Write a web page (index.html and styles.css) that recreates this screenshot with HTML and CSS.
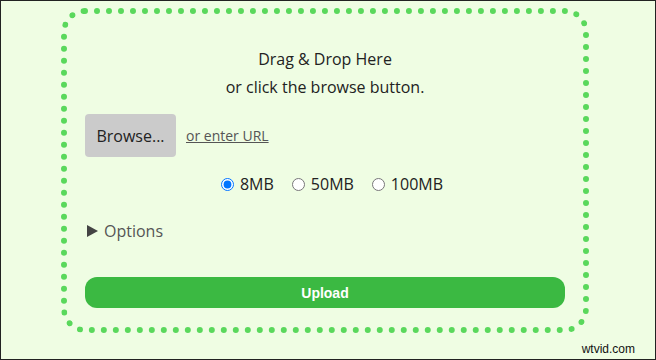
FILE: index.html
```html
<!DOCTYPE html>
<html>
<head>
<meta charset="utf-8">
<link rel="stylesheet" href="styles.css">
</head>
<body>
<div class="frame">
  <div class="dropzone">
    <p class="line">Drag &amp; Drop Here</p>
    <p class="line">or click the browse button.</p>
    <div class="browse-row">
      <button class="browse">Browse...</button>
      <a class="url" href="#">or enter URL</a>
    </div>
    <div class="sizes">
      <label class="size"><input type="radio" name="s" checked> 8MB</label>
      <label class="size"><input type="radio" name="s"> 50MB</label>
      <label class="size"><input type="radio" name="s"> 100MB</label>
    </div>
    <div class="options"><span class="tri"></span>Options</div>
    <button class="upload">Upload</button>
  </div>
  <span class="mark">wtvid.com</span>
</div>
</body>
</html>
```
FILE: styles.css
```css
html, body { margin: 0; padding: 0; }
body { font-family: "Open Sans", "Noto Sans", sans-serif; }
.frame {
  position: relative;
  width: 656px; height: 360px;
  box-sizing: border-box;
  border: 1px solid #222;
  background: #effde3;
  padding: 7px 0 0 60px;
}
.dropzone {
  width: 528px; height: 325px;
  box-sizing: border-box;
  border: 6px dotted #5ad85c;
  border-radius: 24px;
  padding: 31px 18px 0 18px;
  display: flex; flex-direction: column;
}
.line {
  margin: 0; text-align: center;
  font-size: 16px; line-height: 28px; color: #222;
}
.browse-row {
  display: flex; align-items: center; gap: 10px;
  margin-top: 13px;
}
.browse {
  width: 91px; height: 43px;
  border: none; border-radius: 4px;
  background: #cbcbcb; color: #222;
  font-family: inherit; font-size: 16px;
  padding: 0;
}
.url { color: #555; font-size: 14px; text-decoration: underline; }
.sizes {
  display: flex; justify-content: center; gap: 18px;
  margin-top: 16px; height: 22px; align-items: center;
  padding-left: 14px;
  font-size: 16px; color: #222;
}
.size { display: flex; align-items: center; gap: 2px; }
.size input { margin: 0 4px 0 0; width: 13px; height: 13px; }
.options {
  margin-top: 25px; line-height: 22px;
  font-size: 16px; color: #555;
  display: flex; align-items: center;
}
.tri {
  width: 0; height: 0;
  border-left: 11px solid #444;
  border-top: 6px solid transparent;
  border-bottom: 6px solid transparent;
  margin: 0 6px 0 2px;
}
.upload {
  margin-top: 35px; height: 31px;
  border: none; border-radius: 12px;
  background: #3bb942; color: #fff;
  font-family: "Liberation Sans", Arial, sans-serif;
  font-weight: bold; font-size: 14px;
}
.mark {
  position: absolute; right: 20px; bottom: 3px;
  font-family: "Liberation Sans", Arial, sans-serif;
  font-size: 12px; color: #111;
}
```
